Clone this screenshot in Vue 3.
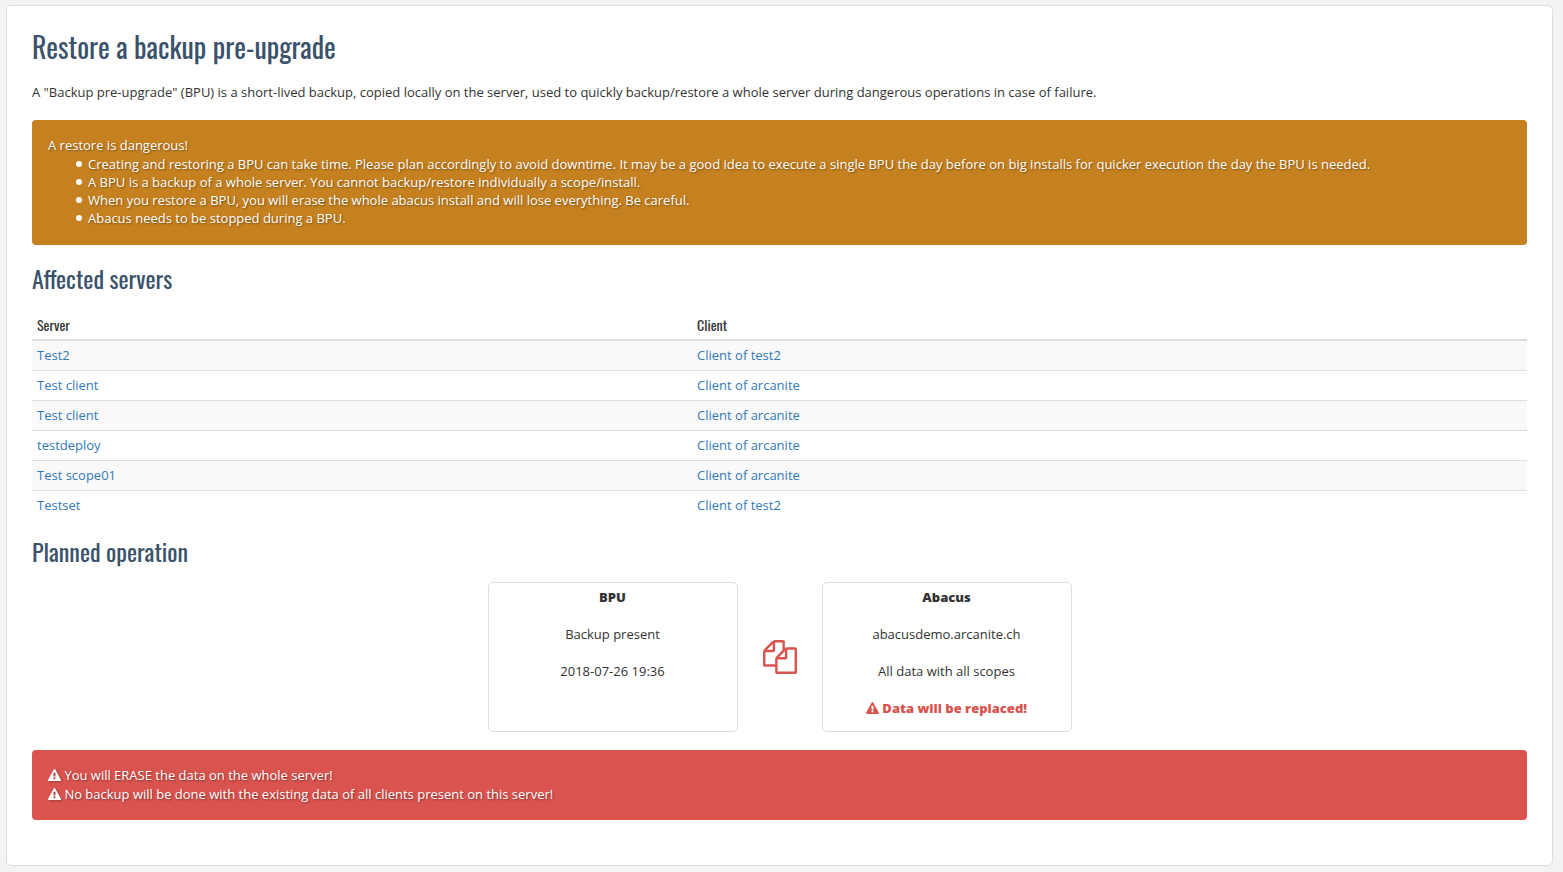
<script setup>
const warnings = [
  'Creating and restoring a BPU can take time. Please plan accordingly to avoid downtime. It may be a good idea to execute a single BPU the day before on big installs for quicker execution the day the BPU is needed.',
  'A BPU is a backup of a whole server. You cannot backup/restore individually a scope/install.',
  'When you restore a BPU, you will erase the whole abacus install and will lose everything. Be careful.',
  'Abacus needs to be stopped during a BPU.',
]

const servers = [
  { name: 'Test2', client: 'Client of test2' },
  { name: 'Test client', client: 'Client of arcanite' },
  { name: 'Test client', client: 'Client of arcanite' },
  { name: 'testdeploy', client: 'Client of arcanite' },
  { name: 'Test scope01', client: 'Client of arcanite' },
  { name: 'Testset', client: 'Client of test2' },
]

const dangers = [
  'You will ERASE the data on the whole server!',
  'No backup will be done with the existing data of all clients present on this server!',
]

const trianglePath =
  'M1024 1375v-190q0-14-9.5-23.5t-22.5-9.5h-192q-13 0-22.5 9.5t-9.5 23.5v190q0 14 9.5 23.5t22.5 9.5h192q13 0 22.5-9.5t9.5-23.5zm-2-374l18-459q0-12-10-19-13-11-24-11h-220q-11 0-24 11-10 7-10 21l17 457q0 10 10 16.5t24 6.5h185q14 0 23.5-6.5t10.5-16.5zm-14-934l768 1408q35 63-2 126-17 29-46.5 46t-63.5 17h-1536q-34 0-63.5-17t-46.5-46q-37-63-2-126l768-1408q17-31 47-49t65-18 65 18 47 49z'
const copyPath =
  'M1696 384q40 0 68 28t28 68v1216q0 40-28 68t-68 28h-960q-40 0-68-28t-28-68v-288h-544q-40 0-68-28t-28-68v-672q0-40 20-88t48-76l408-408q28-28 76-48t88-20h416q40 0 68 28t28 68v328q68-40 128-40h416zm-544 213l-299 299h299v-299zm-640-384l-299 299h299v-299zm196 647l316-316v-416h-384v416q0 40-28 68t-68 28h-416v640h512v-256q0-40 20-88t48-76zm956 804v-1152h-384v416q0 40-28 68t-68 28h-416v640h896z'
</script>

<template>
  <main class="panel">
    <h1>Restore a backup pre-upgrade</h1>
    <p class="intro">
      A "Backup pre-upgrade" (BPU) is a short-lived backup, copied locally on the server, used to quickly backup/restore a whole server during dangerous operations in case of failure.
    </p>

    <section class="alert warning">
      <p>A restore is dangerous!</p>
      <ul>
        <li v-for="w in warnings" :key="w">{{ w }}</li>
      </ul>
    </section>

    <h2>Affected servers</h2>
    <table>
      <thead>
        <tr>
          <th class="server" scope="col">Server</th>
          <th scope="col">Client</th>
        </tr>
      </thead>
      <tbody>
        <tr v-for="(s, i) in servers" :key="i">
          <td><a href="#">{{ s.name }}</a></td>
          <td><a href="#">{{ s.client }}</a></td>
        </tr>
      </tbody>
    </table>

    <h2>Planned operation</h2>
    <div class="operation">
      <div class="card">
        <strong>BPU</strong>
        <span>Backup present</span>
        <span>2018-07-26 19:36</span>
      </div>
      <svg class="copy" viewBox="0 0 1792 1792" aria-hidden="true"><path :d="copyPath" /></svg>
      <div class="card">
        <strong>Abacus</strong>
        <span>abacusdemo.arcanite.ch</span>
        <span>All data with all scopes</span>
        <strong class="replaced">
          <svg class="icon" viewBox="0 0 1792 1792" aria-hidden="true"><path :d="trianglePath" /></svg>
          Data will be replaced!
        </strong>
      </div>
    </div>

    <section class="alert danger">
      <p v-for="d in dangers" :key="d">
        <svg class="icon" viewBox="0 0 1792 1792" aria-hidden="true"><path :d="trianglePath" /></svg>
        {{ d }}
      </p>
    </section>
  </main>
</template>

<style>
body {
  background: #f3f3f3;
}
</style>

<style scoped>
.panel {
  margin: 5px 10px 6px 6px;
  padding: 24px 25px 45px;
  background: #fff;
  border: 1px solid #ddd;
  border-radius: 5px;
  color: #333;
  font: 13px/19px "Open Sans", "Noto Sans", sans-serif;
}
h1,
h2 {
  margin: 0;
  color: #3a526a;
  font-family: Oswald, "Liberation Sans Narrow", "Open Sans Condensed", "Roboto Condensed", "Liberation Sans", sans-serif;
  font-weight: 400;
}
h1 {
  font-size: 28px;
  line-height: 34px;
}
h2 {
  font-size: 24px;
  line-height: 26px;
}
p {
  margin: 0;
}
.intro {
  margin: 19px 0 18px;
}
.alert {
  padding: 16px;
  border-radius: 4px;
  color: #fff;
  text-shadow: 1px 1px 2px rgba(0, 0, 0, 0.4);
}
.warning {
  margin-bottom: 20px;
  padding-bottom: 18px;
  background: #c5811f;
}
.danger {
  margin-top: 18px;
  background: #d9534f;
}
ul {
  margin: 0;
  padding-left: 28px;
  list-style: none;
}
li {
  display: flex;
  gap: 6px;
  line-height: 18px;
}
li::before {
  content: "";
  flex: none;
  width: 6px;
  height: 6px;
  margin-top: 6px;
  border-radius: 50%;
  background: #fff;
}
table {
  width: 100%;
  margin: 20px 0 18px;
  border-collapse: collapse;
}
th,
td {
  padding: 5px;
  text-align: left;
}
th {
  border-bottom: 2px solid #ddd;
  font-family: Oswald, "Liberation Sans Narrow", "Open Sans Condensed", "Roboto Condensed", "Liberation Sans", sans-serif;
  font-size: 14px;
  font-weight: 400;
  line-height: 18px;
}
.server {
  width: 44.15%;
}
td {
  border-top: 1px solid #ddd;
}
tbody tr:nth-child(odd) {
  background: #f9f9f9;
}
a {
  color: #337ab7;
  text-decoration: none;
}
.operation {
  display: flex;
  justify-content: center;
  align-items: center;
  gap: 25px;
  margin-top: 18px;
}
.card {
  display: flex;
  flex-direction: column;
  align-items: center;
  align-self: stretch;
  gap: 18px;
  box-sizing: border-box;
  width: 250px;
  padding: 5px 5px 13px;
  border: 1px solid #ddd;
  border-radius: 5px;
}
strong {
  font-weight: 800;
}
.copy {
  width: 34px;
  height: 34px;
  fill: #d9534f;
}
.icon {
  width: 13px;
  height: 13px;
  fill: currentColor;
  vertical-align: -2px;
}
.danger .icon {
  filter: drop-shadow(1px 1px 1px rgba(0, 0, 0, 0.3));
}
.replaced {
  color: #d9534f;
}
</style>
